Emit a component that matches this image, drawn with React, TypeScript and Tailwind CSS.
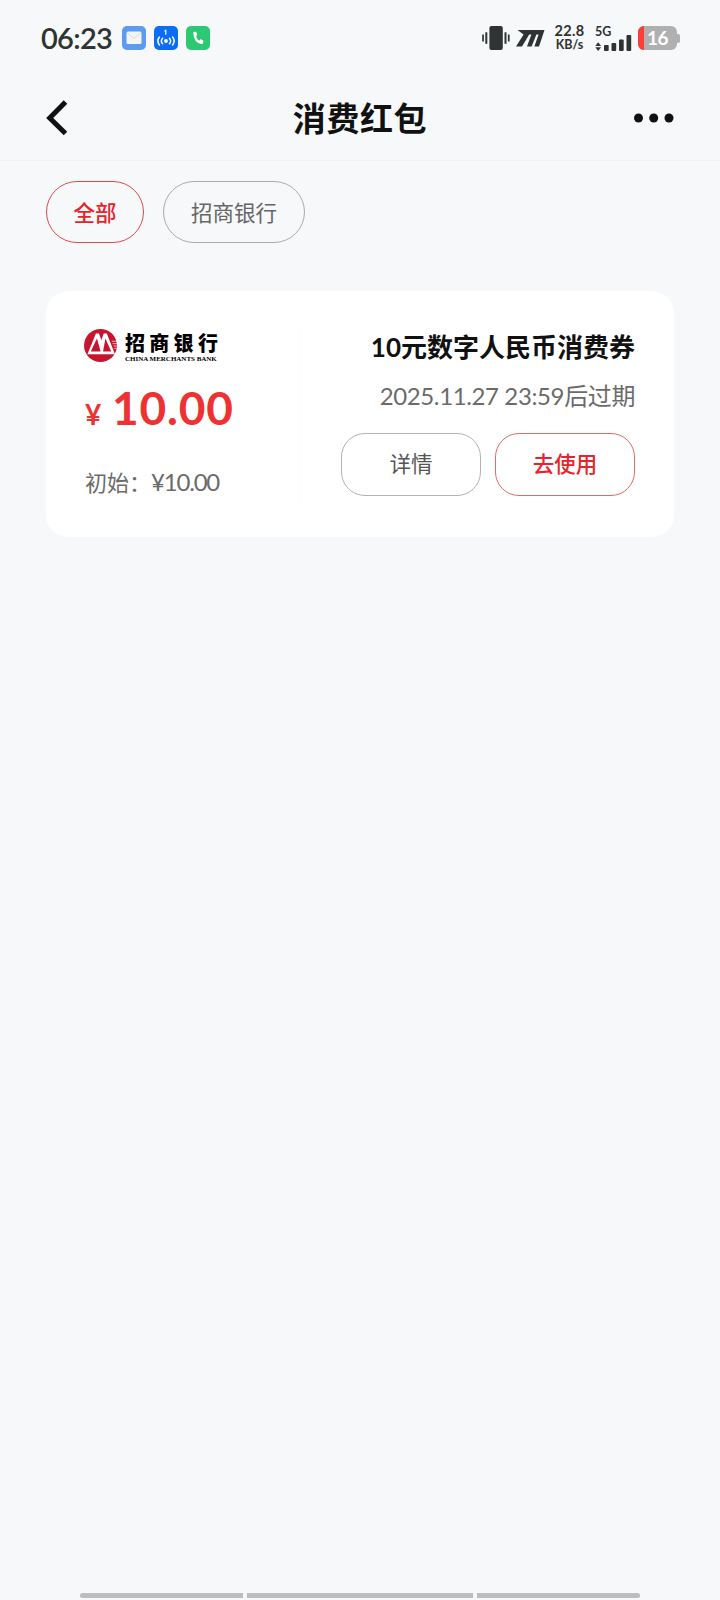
import React from 'react';

interface Coupon {
    id: string;
    amount: string;
    initial: string;
    title: string;
    expires: string;
}

const filters = [
    { label: '全部', active: true },
    { label: '招商银行', active: false },
];

const coupons: Coupon[] = [
    {
        id: 'cmb-10',
        amount: '10.00',
        initial: '¥10.00',
        title: '10元数字人民币消费券',
        expires: '2025.11.27 23:59后过期',
    },
];

function StatusBar() {
    return (
        <div className="flex h-[76px] items-center pl-[40px] pr-[40px] text-[#2f3331]">
            <span className="-mt-[2px] w-[82px] whitespace-nowrap pl-px text-[29px] font-semibold leading-none tracking-[-0.7px]">06:23</span>

            {/* Notification icons */}
            <div className="flex gap-[8px]">
                <svg width="24" height="24" viewBox="0 0 24 24">
                    <rect width="24" height="24" rx="5" fill="#5b9cf0" />
                    <rect x="4.5" y="5.5" width="15" height="12.5" rx="1.5" fill="#f4f4f4" />
                    <path d="M5 6.5l7 6 7-6" fill="none" stroke="#d9dcdf" strokeWidth="1" />
                </svg>
                <svg width="24" height="24" viewBox="0 0 24 24">
                    <rect width="24" height="24" rx="5" fill="#0a6cf8" />
                    <path d="M10.5 5.2l1.3-.8v4.4" fill="none" stroke="#fff" strokeWidth="1.2" />
                    <circle cx="12" cy="15" r="1.9" fill="#fff" />
                    <path
                        d="M8.6 12.2a4.2 4.2 0 000 5.6M15.4 12.2a4.2 4.2 0 010 5.6M5.4 11a6.6 6.6 0 000 8M18.6 11a6.6 6.6 0 010 8"
                        fill="none"
                        stroke="#fff"
                        strokeWidth="1.5"
                        strokeLinecap="round"
                    />
                </svg>
                <svg width="24" height="24" viewBox="0 0 24 24">
                    <rect width="24" height="24" rx="5" fill="#2cc872" />
                    <path
                        d="M8.8 7.2c-.6 5 2.4 9.6 7.6 9.6"
                        fill="none"
                        stroke="#fff"
                        strokeWidth="2.4"
                    />
                    <path d="M7.8 6.4l2.2-.2.6 3-2 1zM13.2 15.4l1.4-1.8 2.5 1.4-.9 2.6z" fill="#fff" stroke="#fff" strokeLinejoin="round" />
                </svg>
            </div>

            <div className="ml-auto flex items-center">
                <svg width="29" height="26" viewBox="0 0 29 26" fill="currentColor">
                    <rect x="0.2" y="9.5" width="1.7" height="7" />
                    <rect x="3.3" y="7.3" width="2" height="11.5" />
                    <rect x="7.4" y="1" width="13.4" height="24" rx="2" />
                    <rect x="22.5" y="7.3" width="2" height="11.5" />
                    <rect x="25.9" y="9.5" width="1.7" height="7" />
                </svg>
                <svg className="ml-[5px]" width="29" height="17" viewBox="0 0 29 17" fill="currentColor">
                    <path d="M1.5 0h27L23 16.5h-4.6L22.6 4.6h-2.2L15.6 16.5H11L15.4 4.6h-2.2L6 16.5H0L7.6 4.6z" />
                </svg>
                <div className="ml-[9px] mr-[2px] flex w-[31px] flex-col items-center whitespace-nowrap font-bold">
                    <span className="text-[14.5px] leading-[14px] tracking-[0.3px]">22.8</span>
                    <span className="text-[12.5px] leading-[14px]">KB/s</span>
                </div>
                <div className="ml-[8px] flex w-[38px] flex-col">
                    <span className="text-[12.5px] font-bold leading-[11px]">5G</span>
                    <svg className="-mt-[3px]" width="38" height="17" viewBox="0 0 38 17" fill="currentColor">
                        <path d="M0.3 12L3.2 8.2 6.1 12zM0.3 13.2L3.2 17l2.9-3.8z" />
                        <rect x="9" y="11" width="4.7" height="6" rx="1" />
                        <rect x="16.5" y="9" width="4.7" height="8" rx="1" />
                        <rect x="24" y="5.5" width="4.7" height="11.5" rx="1" />
                        <rect x="31.5" y="1" width="4.7" height="16" rx="1" />
                    </svg>
                </div>
                <div className="ml-[5px] flex items-center">
                    <div className="flex h-6 w-[39px] items-center overflow-hidden rounded-[6px] bg-[#b0b0b0]">
                        <div className="h-full w-[6px] bg-[#fb3e36]" />
                        <span className="-mt-px ml-[3px] text-[19px] font-bold leading-none tracking-[-0.5px] text-white">16</span>
                    </div>
                    <div className="h-[9px] w-[3px] rounded-r-[2px] bg-[#b0b0b0]" />
                </div>
            </div>
        </div>
    );
}

function BankLogo() {
    return (
        <div className="flex h-[34px] items-start pt-[2px]">
            <svg className="shrink-0" width="33" height="33" viewBox="0 0 97 97">
                <circle cx="48.5" cy="48.5" r="48.5" fill="#c8152f" />
                <path d="M10 74L35 13h9l7 20 7-20h9l24 61z" fill="#fff" />
                <path d="M20 66l18-38 11 38zM56 66l7-38 17 38z" fill="#c8152f" />
                <path d="M82 36h15M84 43h13M87 50h10M89 57h7" stroke="#fff" strokeWidth="2" />
            </svg>
            <div className="ml-[8px] flex flex-col pt-[3px]">
                <span className="whitespace-nowrap text-[20px] font-black leading-[22px] tracking-[4.3px] text-black">招商银行</span>
                <span className="mt-[2px] whitespace-nowrap font-['Liberation_Serif',serif] text-[7px] font-bold leading-[7px] tracking-[-0.02px] text-black">
                    CHINA MERCHANTS BANK
                </span>
            </div>
        </div>
    );
}

function CouponCard({ coupon }: { coupon: Coupon }) {
    return (
        <div className="mx-[46px] mt-[48px] flex h-[246px] rounded-[22px] bg-white">
            <div className="my-[36px] flex w-[254px] flex-col border-r border-[#fcfcfc] pl-[38px]">
                <BankLogo />
                <div className="mt-[23px] flex items-baseline whitespace-nowrap leading-[48px] text-[#ee3232]">
                    <span className="w-[28px] pl-px text-[28px] font-bold">¥</span>
                    <span className="text-[46px] font-bold tracking-[0.8px]">{coupon.amount}</span>
                </div>
                <div className="mt-[32px] whitespace-nowrap pl-px text-[22px] leading-[24px] text-[#6b6b6b]">
                    初始：<span className="text-[24px] tracking-[-1.2px]">{coupon.initial}</span>
                </div>
            </div>

            <div className="flex flex-1 flex-col items-end pr-[39px] pt-[39px]">
                <div className="whitespace-nowrap text-[26px] font-bold leading-[34px] text-[#111]">{coupon.title}</div>
                <div className="mt-[15px] whitespace-nowrap text-[24px] leading-[34px] tracking-[-0.38px] text-[#6b6b6b]">{coupon.expires}</div>
                <div className="mt-[20px] flex gap-[14px]">
                    <button className="h-[63px] w-[140px] rounded-[24px] border border-[#b4b4b4] text-[21.5px] text-[#555]">
                        详情
                    </button>
                    <button className="h-[63px] w-[140px] rounded-[24px] border border-[#e26a6c] text-[21.5px] font-medium text-[#e8242b]">
                        去使用
                    </button>
                </div>
            </div>
        </div>
    );
}

export default function App() {
    return (
        <div className="flex h-[1600px] w-[720px] flex-col overflow-hidden bg-[#f6f8fa] font-['Lato','Noto_Sans_CJK_SC',sans-serif]">
            <StatusBar />

            {/* Header */}
            <header className="flex h-[85px] items-center justify-between border-b border-[#f0f1f3] pl-[46px] pr-[46px] text-[#111]">
                <svg width="40" height="38" viewBox="0 0 40 38">
                    <path d="M19.5 3L3.7 19l15.8 15.5" fill="none" stroke="currentColor" strokeWidth="5" />
                </svg>
                <h1 className="whitespace-nowrap text-[33px] font-bold leading-none tracking-[0.6px]">消费红包</h1>
                <svg width="40" height="10" viewBox="0 0 40 10" fill="currentColor">
                    <circle cx="4.5" cy="5" r="4.5" />
                    <circle cx="19.7" cy="5" r="4.5" />
                    <circle cx="35" cy="5" r="4.5" />
                </svg>
            </header>

            {/* Bank filters */}
            <div className="mt-[20px] flex gap-[19px] pl-[46px]">
                {filters.map((f) => (
                    <button
                        key={f.label}
                        className={
                            f.active
                                ? 'h-[62px] w-[98px] rounded-full border border-[#df4a4e] pt-[3px] text-[21.5px] font-medium text-[#e8242b]'
                                : 'h-[62px] w-[142px] rounded-full border border-[#a9abad] pt-[3px] text-[21.5px] text-[#666]'
                        }
                    >
                        {f.label}
                    </button>
                ))}
            </div>

            {coupons.map((c) => (
                <CouponCard key={c.id} coupon={c} />
            ))}

            {/* Gesture hints */}
            <div className="mb-[2px] mt-auto flex justify-center gap-[4px]">
                <div className="h-[5px] w-[163px] rounded-l-full bg-[#bcbdbf]" />
                <div className="h-[5px] w-[226px] bg-[#bcbdbf]" />
                <div className="h-[5px] w-[163px] rounded-r-full bg-[#bcbdbf]" />
            </div>
        </div>
    );
}
